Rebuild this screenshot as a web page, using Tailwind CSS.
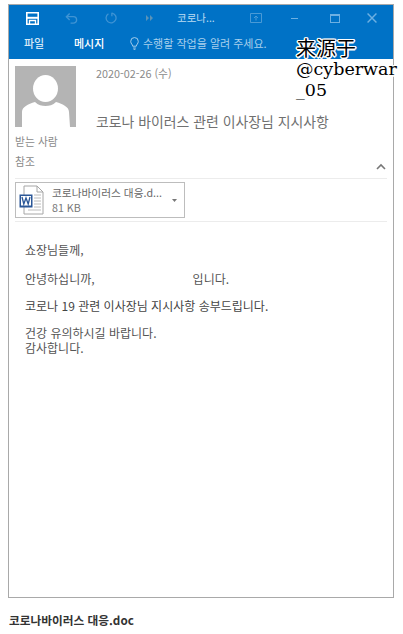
<!doctype html>
<html lang="ko">
<head>
<meta charset="utf-8">
<script src="https://cdn.jsdelivr.net/npm/@tailwindcss/browser@4"></script>
</head>
<body class="bg-white">
<div class="relative w-[403px] h-[634px] overflow-hidden bg-white pt-[4px] pl-[8px] font-['Noto_Sans_CJK_KR','Noto_Sans',sans-serif] text-[#666]">
  <div class="w-[386px] h-[594px] border border-[#a9a9a9] flex flex-col">
    <!-- title bar -->
    <div class="h-[54px] bg-[#0072c6] shrink-0 flex flex-col">
      <div class="h-[26px] flex items-center text-white shrink-0">
        <svg class="ml-[17px] w-[13px] h-[13px] shrink-0" viewBox="0 0 13 13" fill="none" stroke="#fff"><path d="M.8.8h11.400v11.400H.8z" stroke-width="1.600"/><path d="M1 5.800h11" stroke-width="2"/><path d="M3.500 12.500V8.500h6v4" stroke-width="1.300"/></svg>
        <svg class="ml-[26px] w-[13px] h-[13px] shrink-0" viewBox="0 0 14 14" fill="none" stroke="#3f94d4" stroke-width="1.500"><path d="M5 1.500 1.500 5 5 8.500"/><path d="M1.500 5H9a3.500 3.500 0 0 1 0 7H6"/></svg>
        <svg class="ml-[27px] w-[12px] h-[12px] shrink-0" viewBox="0 0 14 14" fill="none" stroke="#3f94d4" stroke-width="1.500"><path d="M8 1.200a5.800 5.800 0 1 1-4 .8"/><path d="M8 1v4"/></svg>
        <svg class="ml-[29px] w-[7px] h-[6px] shrink-0" viewBox="0 0 7 6" fill="#5a93b8"><path d="M0 0l3 3-3 3zM4 0l3 3-3 3z"/></svg>
        <span class="ml-[24px] w-[38px] shrink-0 whitespace-nowrap text-[10.500px] leading-[14px] text-[#bcdcf2]">코로나...</span>
        <svg class="ml-[35px] w-[12px] h-[10px] shrink-0" viewBox="0 0 12 10" fill="none" stroke="#4a9ad6"><path d="M.5.5h11v9H.5z"/><path d="M6 7.500V3M4 5l2-2 2 2"/></svg>
        <span class="ml-[29px] w-[7px] h-px bg-[#6db0e2] shrink-0"></span>
        <span class="ml-[32px] w-[10px] h-[9px] border border-[#6db0e2] border-t-2 shrink-0"></span>
        <svg class="ml-[27px] w-[10px] h-[10px] shrink-0" viewBox="0 0 9 9" stroke="#6db0e2" stroke-width="1.300"><path d="M.5.5l8 8M8.500.5l-8 8"/></svg>
      </div>
      <div class="h-[28px] pb-[4px] flex items-center text-[11px] leading-[14px] text-[#d5e8f6]">
        <span class="ml-[15px] w-[21px] shrink-0 font-medium">파일</span>
        <span class="ml-[29px] w-[31px] shrink-0 font-medium text-white">메시지</span>
        <svg class="ml-[25px] w-[9px] h-[13px] shrink-0" viewBox="0 0 10 14" fill="none" stroke="#b5d6ee"><path d="M3 10C3 8 .8 7.400.8 4.600a4.200 4.200 0 0 1 8.400 0C9.200 7.400 7 8 7 10z"/><path d="M3.500 12h3M4 13.500h2"/></svg>
        <span class="ml-[4px] whitespace-nowrap text-[#a9d0ec]">수행할 작업을 알려 주세요.</span>
      </div>
    </div>
    <!-- header -->
    <div class="h-[68px] pl-[6px] pt-[7px] flex shrink-0">
      <div class="w-[61px] h-[61px] bg-[#b4b4b4] overflow-hidden shrink-0">
        <svg class="w-[61px] h-[61px]" viewBox="0 0 61 61" fill="#fff"><ellipse cx="30.500" cy="22.500" rx="12.500" ry="13.500"/><path d="M7 61V46c0-5 6-8 13-10 3 3 7 4 10.500 4s7.500-1 10.500-4c7 2 13 5 13 10l1 15z"/></svg>
      </div>
      <div class="ml-[20px] flex flex-col">
        <div class="text-[10.800px] leading-[14px] text-[#8a8a8a]">2020-02-26 (수)</div>
        <div class="mt-[32px] text-[13.900px] leading-[18px] whitespace-nowrap text-[#707070]">코로나 바이러스 관련 이사장님 지시사항</div>
      </div>
    </div>
    <div class="pl-[6px] pr-[6px] mt-[7px] text-[10.800px] leading-[14px] text-[#8a8a8a]">받는 사람</div>
    <div class="pl-[6px] pr-[6px] mt-[6px] flex items-start justify-between h-[24px] text-[10.800px] leading-[14px] text-[#8a8a8a]">
      <span>참조</span>
      <svg class="mt-[9px] mr-[1px] w-[10px] h-[7px]" viewBox="0 0 10 7" fill="none" stroke="#777" stroke-width="1.600"><path d="M1 6l4-4 4 4"/></svg>
    </div>
    <!-- attachment -->
    <div class="mx-[6px] border-y border-[#ececec] h-[44px] flex items-center shrink-0">
      <div class="w-[170px] h-[36px] border border-[#bdbdbd] flex items-center shrink-0">
        <svg class="ml-[3px] w-[26px] h-[30px] shrink-0" viewBox="0 0 26 30" fill="none">
          <path d="M5 1h13l6 6v22H5z" fill="#fff" stroke="#a6a6a6"/>
          <path d="M18 1v6h6" stroke="#a6a6a6"/>
          <path d="M15 10h7M15 13h7M15 16h7M15 19h7M15 22h7M9 25h13" stroke="#bcbcbc"/>
          <rect x="0.500" y="9.500" width="13" height="13" fill="#2b5797"/>
          <rect x="2" y="11" width="10" height="9.500" fill="#fff"/>
          <path d="M3 12l1.800 7 2.200-6 2.200 6 1.800-7" stroke="#2b5797" stroke-width="1.300"/>
        </svg>
        <div class="ml-[7px] w-[111px] shrink-0 flex flex-col">
          <div class="text-[10.700px] leading-[14px] whitespace-nowrap text-[#666]">코로나바이러스 대응.d...</div>
          <div class="mt-px text-[10.700px] leading-[13px] text-[#777]">81 KB</div>
        </div>
        <svg class="ml-[9px] w-[5px] h-[3px] shrink-0" viewBox="0 0 5 3" fill="#777"><path d="M0 0h5L2.500 3z"/></svg>
      </div>
    </div>
    <!-- body -->
    <div class="pl-[16px] pt-[20px] text-[12px] leading-[15px] text-[#555]">
      <p>쇼장님들께,</p>
      <p class="mt-[14px]">안녕하십니까,<span class="ml-[98px]">입니다.</span></p>
      <p class="mt-[12px] text-[#444]">코로나 19 관련 이사장님 지시사항 송부드립니다.</p>
      <p class="mt-[12px]">건강 유의하시길 바랍니다.</p>
      <p>감사합니다.</p>
    </div>
  </div>
  <div class="mt-[15px] ml-px text-[11.700px] leading-[14px] font-bold text-[#333]">코로나바이러스 대응.doc</div>
  <!-- watermark overlay -->
  <div class="absolute left-[296px] top-[37px] w-[107px] text-[17.500px] leading-[21px] text-black font-['DejaVu_Serif','Noto_Sans_CJK_SC',serif] [text-shadow:1.500px_0_0_#fff,-1.500px_0_0_#fff,0_1.500px_0_#fff,0_-1.500px_0_#fff,1px_1px_0_#fff,-1px_-1px_0_#fff,1px_-1px_0_#fff,-1px_1px_0_#fff]">
    <div class="font-['Noto_Sans_CJK_SC',serif] text-[20px] leading-[22px]">来源于</div>
    <div class="whitespace-nowrap">@cyberwar</div>
    <div>_05</div>
  </div>
</div>
</body>
</html>
